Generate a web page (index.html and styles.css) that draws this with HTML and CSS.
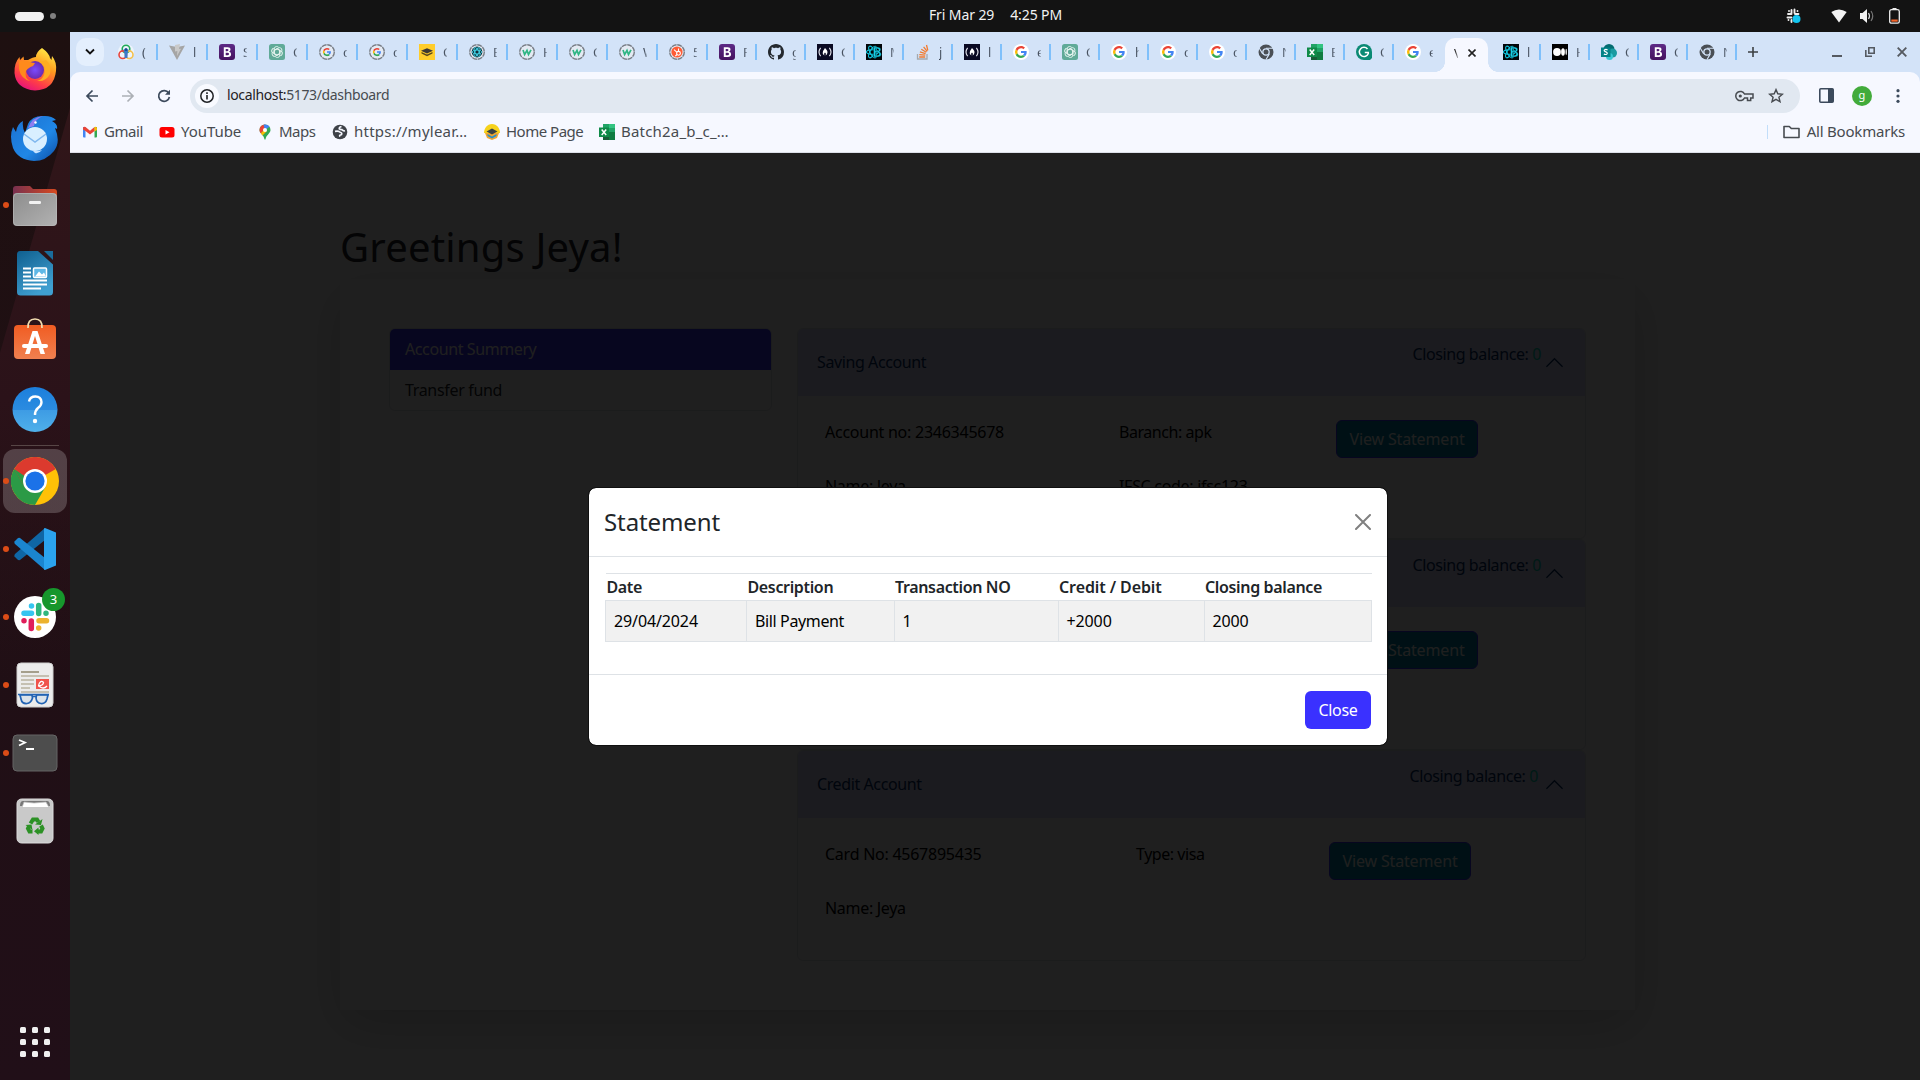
FILE: index.html
```html
<!DOCTYPE html>
<html lang="en">
<head>
<meta charset="utf-8">
<title>Dashboard</title>
<link rel="stylesheet" href="styles.css">
</head>
<body>
<svg class="sprite" xmlns="http://www.w3.org/2000/svg">
  <linearGradient id="gp" x1="0" y1="0" x2="0" y2="1"><stop offset="0" stop-color="#5d2a86"/><stop offset="1" stop-color="#45115e"/></linearGradient>
  <symbol id="rings" viewBox="0 0 16 16"><circle cx="8" cy="8" r="8" fill="#fff" opacity=".6"/><g fill="none" stroke-width="1.6"><circle cx="8" cy="5" r="3.800" stroke="#1faa59"/><circle cx="4.8" cy="10.700" r="3.800" stroke="#e8453c"/><circle cx="11.200" cy="10.700" r="3.800" stroke="#f5c04a"/></g><path d="M5.500 5.500h5l-1 4.500v4h-3v-4z" fill="#3c78c8"/><circle cx="8" cy="5.500" r="1.500" fill="#174b8c"/></symbol>
  <symbol id="vite" viewBox="0 0 16 16"><path d="M0 1.500 8 3l8-1.500L8 16z" fill="#a5a5a5"/><path d="m6 1 5-1-1 5 2-.3L8 12l.4-5L6 7.500z" fill="#c9c9c9"/></symbol>
  <symbol id="boot" viewBox="0 0 16 16"><rect width="16" height="16" rx="3" fill="url(#gp)"/><path d="M4.800 3.300h3.900q2.800 0 2.800 2.300 0 1.600-1.400 2.100 2 .4 2 2.500 0 2.700-3.200 2.700H4.800zM6.700 4.900v2.300h1.500q1.300 0 1.300-1.150T8.200 4.900zM6.700 8.700v2.600h1.800q1.500 0 1.500-1.300T8.500 8.700z" fill="#fff" fill-rule="evenodd"/></symbol>
  <symbol id="gpt" viewBox="0 0 16 16"><rect width="16" height="16" rx="2.500" fill="#60aa98"/><g fill="none" stroke="#e9f5f1" stroke-width=".9" stroke-linejoin="round"><path id="petal" d="M5.200 8.900V5q0-2.500 2.400-2.500 1.200 0 2 .8M5.200 6.300 8 4.700l2.600 1.500"/><use href="#petal" transform="rotate(60 8 8)"/><use href="#petal" transform="rotate(120 8 8)"/><use href="#petal" transform="rotate(180 8 8)"/><use href="#petal" transform="rotate(240 8 8)"/><use href="#petal" transform="rotate(300 8 8)"/></g></symbol>
  <symbol id="dash" viewBox="0 0 16 16"><circle cx="8" cy="8" r="7.300" fill="#e4eaf3" stroke="#777c84" stroke-width="1.400" stroke-dasharray="5 .74"/></symbol>
  <symbol id="g" viewBox="0 0 48 48"><path fill="#4285f4" d="M45 24.500c0-1.600-.1-2.700-.4-3.900H24v7.100h12.100c-.2 1.800-1.600 4.500-4.500 6.300l6.900 5.300C42.600 35.500 45 30.500 45 24.500z"/><path fill="#34a853" d="M24 46c5.900 0 10.900-2 14.500-5.300L31.600 35.300c-1.900 1.300-4.300 2.200-7.600 2.200-5.800 0-10.700-3.800-12.500-9.100l-7.100 5.500C8 41 15.400 46 24 46z"/><path fill="#fbbc05" d="M11.500 28.400a13.500 13.500 0 0 1 0-8.700l-7.200-5.600a22 22 0 0 0 0 19.800z"/><path fill="#ea4335" d="M24 10.500c4.100 0 6.900 1.800 8.500 3.300l6.200-6C34.900 4.200 29.900 2 24 2 15.400 2 8 7 4.300 14.100l7.200 5.600C13.300 14.300 18.200 10.500 24 10.500z"/></symbol>
  <symbol id="goog" viewBox="0 0 16 16"><circle cx="8" cy="8" r="8" fill="#fff"/><use href="#g" x="1.500" y="1.500" width="13" height="13"/></symbol>
  <symbol id="googd" viewBox="0 0 16 16"><use href="#dash"/><use href="#g" x="3.500" y="3.500" width="9" height="9"/></symbol>
  <symbol id="book" viewBox="0 0 16 16"><path fill="#ffcd2b" d="M0 0h16v16H0z"/><path d="m8 4.300 6 2.500-6 2.700-6-2.700z" fill="#3c3733"/><path d="m2.500 8 5.500 2.500L13.500 8v1.500L8 12.200 2.500 9.500z" fill="#5d4a1d"/></symbol>
  <symbol id="reactd" viewBox="0 0 16 16"><use href="#dash"/><circle cx="8" cy="8" r="5.400" fill="#12303a"/><g fill="none" stroke="#3fd0e4" stroke-width=".9"><ellipse cx="8" cy="8" rx="4.800" ry="2"/><ellipse cx="8" cy="8" rx="4.800" ry="2" transform="rotate(60 8 8)"/><ellipse cx="8" cy="8" rx="4.800" ry="2" transform="rotate(120 8 8)"/></g></symbol>
  <symbol id="wd" viewBox="0 0 16 16"><use href="#dash"/><path d="m4 6 1.600 4.500L8 6.500l1.500 4L12 5.800" fill="none" stroke="#2fb583" stroke-width="1.700"/></symbol>
  <symbol id="hubd" viewBox="0 0 16 16"><use href="#dash"/><circle cx="8" cy="8" r="5.600" fill="#ff5c35"/><g fill="none" stroke="#fff" stroke-width="1.100"><circle cx="9.500" cy="9.300" r="1.900"/><path d="M9.500 7.300V4.500M8 8.300 5 5.700M8 10.500l-1.700 1.700"/></g></symbol>
  <symbol id="gh" viewBox="0 0 16 16"><path fill="#24292f" fill-rule="evenodd" d="M8 0C3.580 0 0 3.580 0 8c0 3.540 2.290 6.530 5.470 7.590.4.070.55-.17.55-.38 0-.19-.01-.82-.01-1.490-2.010.37-2.530-.49-2.690-.94-.09-.23-.48-.94-.82-1.130-.28-.15-.68-.52-.01-.53.63-.01 1.080.58 1.230.82.72 1.210 1.870.87 2.330.66.07-.52.28-.87.51-1.070-1.780-.2-3.640-.89-3.640-3.950 0-.87.31-1.590.82-2.150-.08-.2-.36-1.020.08-2.120 0 0 .67-.21 2.200.82.64-.18 1.320-.27 2-.27s1.360.09 2 .27c1.530-1.040 2.200-.82 2.200-.82.44 1.100.16 1.920.08 2.120.51.56.82 1.270.82 2.150 0 3.070-1.870 3.750-3.650 3.950.29.25.54.73.54 1.480 0 1.070-.01 1.930-.01 2.200 0 .21.15.46.55.38A8.010 8.010 0 0 0 16 8c0-4.420-3.580-8-8-8z"/></symbol>
  <symbol id="fcc" viewBox="0 0 16 16"><path fill="#0a0a23" d="M0 0h16v16H0z"/><path d="M3.600 3.800Q.400 8 3.600 12.200M12.400 3.800q3.200 4.200 0 8.400" fill="none" stroke="#e8e8f0" stroke-width="1.100"/><path d="M8 4c2 2 3 3.600 2.300 5.300Q9.800 11 8.600 11.400q1-1.600-.6-2.800-1.600 1.200-.6 2.800Q6 10.800 5.700 9.300 5.500 7 8 4z" fill="#fff"/></symbol>
  <symbol id="reactb" viewBox="0 0 16 16"><path fill="#030609" d="M0 0h16v16H0z"/><g fill="none" stroke="#11c8e0" stroke-width="1.100"><ellipse cx="6.500" cy="8" rx="6" ry="2.300"/><ellipse cx="6.500" cy="8" rx="6.500" ry="2.400" transform="rotate(60 6.500 8)"/><ellipse cx="6.500" cy="8" rx="6.500" ry="2.400" transform="rotate(120 6.500 8)"/></g><path d="M7.500 3h4q3.300 0 3.300 2.500 0 1.700-1.300 2.200 1.800.5 1.800 2.600 0 2.700-3.300 2.700H7.500zM9.500 4.800V7h1.700q1.500 0 1.500-1.100t-1.500-1.100zM9.500 8.700v2.500h2q1.600 0 1.600-1.250t-1.600-1.250z" fill="#19cfe6" stroke="#030609" stroke-width=".4" fill-rule="evenodd"/></symbol>
  <symbol id="so" viewBox="0 0 16 16"><path d="M2.500 10v5h9.500v-5" fill="none" stroke="#a5a9ad" stroke-width="1.300"/><path d="M4.200 13h6M4.300 10.600l6 .6M4.900 7.900l5.700 1.700M6.300 5.200l5 3M8.600 2.800l3.600 4.500M11.500 1l1.300 5.400" fill="none" stroke="#f27a2e" stroke-width="1.300"/></symbol>
  <symbol id="chg" viewBox="0 0 16 16"><circle cx="8" cy="8" r="7.500" fill="#4a4f55"/><circle cx="8" cy="8" r="3.800" fill="#d3e3f8"/><circle cx="8" cy="8" r="2.500" fill="#4a4f55"/><path d="M8 4.200h7M4.700 9.900 1.200 4M11.300 9.900 7.900 15.700" stroke="#d3e3f8" stroke-width="1.100"/></symbol>
  <symbol id="xl" viewBox="0 0 16 16"><path d="M4 0h12v16H4z" fill="#107c41"/><path d="M10 0h6v4h-6z" fill="#33c481"/><path d="M4 0h6v4H4z" fill="#21a366"/><path d="M10 8h6v4h-6z" fill="#107c41"/><path d="M4 8h6v8H4z" fill="#185c37"/><path d="M10 4h6v4h-6z" fill="#21a366"/><path d="M0 3.500h10v9.500H0z" fill="#0f8a48"/><path d="m2.700 5.500 4.500 5.500m0-5.500L2.700 11" stroke="#fff" stroke-width="1.500"/></symbol>
  <symbol id="gram" viewBox="0 0 16 16"><path d="M8 0a8 8 0 0 1 8 8v6l-2 2H8A8 8 0 0 1 8 0z" fill="#0b8a74"/><path d="M11.500 5A4.600 4.600 0 1 0 12.300 9.500V8.600H8.800" fill="none" stroke="#fff" stroke-width="1.500"/></symbol>
  <symbol id="med" viewBox="0 0 16 16"><path d="M0 0h16v16H0z"/><circle cx="5" cy="8" r="3.900" fill="#fff"/><ellipse cx="11" cy="8" rx="1.900" ry="3.700" fill="#fff"/><ellipse cx="14.200" cy="8" rx=".7" ry="3.300" fill="#fff"/></symbol>
  <symbol id="sp" viewBox="0 0 16 16"><circle cx="8" cy="5.500" r="5.500" fill="#036c70"/><circle cx="11.500" cy="9" r="4.500" fill="#1a9ba1"/><circle cx="8.500" cy="12.500" r="3.500" fill="#37c6d0"/><path d="M0 3.500h9.500v9.500H0z" fill="#038387"/><path d="M6.600 6Q5 5 3.800 5.700t0 1.700l1.800.9q1.300 1.100 0 1.900-1.200.7-2.700-.3" fill="none" stroke="#fff" stroke-width="1.200"/></symbol>
</svg>

<header class="topbar">
  <div class="workspaces"><i></i><b></b></div>
  <div class="clock"><span>Fri Mar 29</span><span>4:25 PM</span></div>
  <div class="tray">
    <svg class="tray-slack" width="16" height="18" viewBox="0 0 16 18"><g stroke="#eee" stroke-width="1.900" stroke-linecap="round"><path d="M6.500 3v3.500M9.500 2.500V6M3 7h3.500M10 7h3.500M2.500 10.500h4M6.500 13v2M9.500 11v3M4 4v.1M12.500 4v.1M3.500 13v.1"/></g><circle cx="11.500" cy="12" r="4" fill="#12c5f0"/></svg>
    <svg class="tray-wifi" width="16" height="14" viewBox="0 0 16 14"><path d="M.300 3Q8-2 15.700 3L8 13.500z" fill="#f4f4f4"/></svg>
    <svg class="tray-vol" width="16" height="14" viewBox="0 0 16 14"><path d="M1 4h2.500L8 0v14L3.500 10H1z" fill="#f4f4f4"/><path d="M9.500 4q2 3 0 6" fill="none" stroke="#ddd" stroke-width="1.200"/><path d="M12 2q3.500 5 0 10" fill="none" stroke="#777" stroke-width="1.200"/></svg>
    <svg width="11" height="16" viewBox="0 0 11 16"><path d="M3.500 0h4v1.500h-4z" fill="#eee"/><rect x=".7" y="1.600" width="9.600" height="13.600" rx="1.800" fill="none" stroke="#eee" stroke-width="1.300"/><path d="M2.300 11.500h6.400v2.200H2.300z" fill="#f2642a"/></svg>
  </div>
</header>

<div class="desktop">
<nav class="dock">
  <div class="app"><svg width="48" height="48" viewBox="0 0 48 48"><defs><linearGradient id="ff" x1=".8" y1="0" x2=".3" y2="1"><stop offset="0" stop-color="#fff04a"/><stop offset=".4" stop-color="#ff9a1f"/><stop offset=".75" stop-color="#ff3d47"/><stop offset="1" stop-color="#e5127d"/></linearGradient><radialGradient id="ffp"><stop offset="0" stop-color="#7a4bff"/><stop offset="1" stop-color="#6a2bb0"/></radialGradient></defs><path d="M31 3q7 5 8 10l1.500 2 .5-4Q46 17 45 26 43 45 24 45.500 5 44 3.500 28q-.5-10 5-16l.5 3 3.500-3.500.5 3.500h4q5-3 8-3Q25 7 31 3z" fill="url(#ff)"/><circle cx="24" cy="25" r="9" fill="url(#ffp)"/><path d="M8 16q8-1 11 1 3 1 5 1-1 3-4.500 4Q16 24 15 26q-2 7 4 10-9-2-11-12z" fill="#ff8a1c"/><path d="M29 17q7 4 4 13-2 5-7 6 9 1 13-7 2-9-4-14z" fill="#ffad20"/></svg></div>
  <div class="app bird"><svg width="50" height="48" viewBox="0 0 50 48"><defs><linearGradient id="tb" x1="0" y1="0" x2="1" y2="1"><stop offset="0" stop-color="#1b70cf"/><stop offset=".6" stop-color="#2087e6"/><stop offset="1" stop-color="#0c4da4"/></linearGradient></defs><path d="M18 10Q22 1 35 2q7 0 11 4l-4 1q6 3 5 8l-2-1q6 14-1 23-8 10-20 10Q8 46 3 34-1 22 3 13l3 5q1-8 7-11-1 6 2 12z" fill="url(#tb)"/><path d="M18 14Q22 3 33 2q-8 3-9 10z" fill="#8f7cf0"/><circle cx="25.500" cy="8.500" r="1.200" fill="#fff"/><circle cx="25" cy="25" r="12" fill="#d9efff"/><path d="M14 20l11 8 11-8" fill="none" stroke="#80b8ee" stroke-width="1.500"/><path d="M22 36q5 2 10 0-3 4-7 3z" fill="#c5e2ff"/></svg></div>
  <div class="app running"><svg width="48" height="48" viewBox="0 0 48 48"><defs><linearGradient id="fd"><stop offset="0" stop-color="#78304f"/><stop offset="1" stop-color="#d84a20"/></linearGradient><linearGradient id="fg" x1="0" y1="0" x2="1" y2="1"><stop offset="0" stop-color="#8d8d8d"/><stop offset="1" stop-color="#b2b2b2"/></linearGradient></defs><path d="M2 8q0-3 3-3h14l3 3h21q3 0 3 3v10H2z" fill="url(#fd)"/><rect x="2" y="12" width="44" height="33" rx="4" fill="url(#fg)"/><rect x="2.500" y="12.500" width="43" height="32" rx="4" fill="none" stroke="#bbb" stroke-opacity=".6"/><rect x="18" y="20" width="12" height="3" rx="1.200" fill="#f2f2f2"/></svg></div>
  <div class="app"><svg width="48" height="48" viewBox="0 0 48 48"><defs><linearGradient id="lw" x1="0" y1="0" x2=".5" y2="1"><stop offset="0" stop-color="#0f5f8f"/><stop offset="1" stop-color="#3f9fd0"/></linearGradient></defs><path d="M9 2h18L42 15.500V43q0 3.500-3.500 3.500h-29Q6 46.500 6 43V5.500Q6 2 9 2z" fill="url(#lw)"/><path d="M33 2h9v9z" fill="#1a6c9c"/><path d="M12 19.500h8M12 23.500h8M12 27.500h8M12 31.500h24M12 35.500h24M12 39.500h18" stroke="#fff" stroke-width="2"/><rect x="22.500" y="19" width="13" height="9.500" rx="1" fill="#5fb8e6" stroke="#fff" stroke-width="1.500"/><path d="m24 27.500 4-5 3 3 2-2 2 4z" fill="#fff"/></svg></div>
  <div class="app"><svg width="48" height="48" viewBox="0 0 48 48"><defs><linearGradient id="sw" x1="0" y1="0" x2="0" y2="1"><stop offset="0" stop-color="#f15c22"/><stop offset="1" stop-color="#f08050"/></linearGradient></defs><rect x="3" y="8" width="42" height="34" rx="4" fill="url(#sw)"/><path d="M17 11Q16.500 2 24 2t7 9" fill="none" stroke="#f2ddb0" stroke-width="1.700"/><path d="M21.500 14h5l7.500 23h-4.500L24 19l-5.500 18H14z" fill="#fff"/><rect x="11" y="27" width="26" height="4" rx="2" fill="#fff"/></svg></div>
  <div class="app"><svg width="48" height="48" viewBox="0 0 48 48"><defs><linearGradient id="hp" x1="0" y1="0" x2="0" y2="1"><stop offset="0" stop-color="#1c7fdc"/><stop offset=".5" stop-color="#2b8be0"/><stop offset=".5" stop-color="#3d9be4"/><stop offset="1" stop-color="#4fb0ea"/></linearGradient></defs><circle cx="24" cy="24.500" r="22.500" fill="url(#hp)"/><path d="M18 16.500q1-5 6.500-5t6 5.500q0 3.500-3.500 6-3 2.500-3 7" fill="none" stroke="#fff" stroke-width="2.400"/><circle cx="24" cy="36" r="2.200" fill="#fff"/></svg></div>
  <hr>
  <div class="app running active"><svg width="48" height="48" viewBox="0 0 48 48"><circle cx="24" cy="24" r="24" fill="#ffc107"/><path d="M24 24 3.200 12A24 24 0 0 1 44.800 12z" fill="#dc3a2e"/><path d="M3.200 12A24 24 0 0 0 24 48L34.400 30 24 24z" fill="#2b9a46"/><path d="M3.200 12 13.600 30 24 24 24 12z" fill="#dc3a2e"/><path d="M3.200 12 13.600 30H15V20z" fill="#2b9a46"/><circle cx="24" cy="24" r="12" fill="#fff"/><circle cx="24" cy="24" r="9.600" fill="#1b72e8"/></svg></div>
  <div class="app running"><svg width="48" height="48" viewBox="0 0 48 48"><path d="M4 29 34 3v12L9 35q-1.500.500-2.500-.5L3.500 31.500Q3 30 4 29z" fill="#0f66a5"/><path d="M4 19 34 45V33L9 13q-1.500-.5-2.500.5L3.500 16.500Q3 18 4 19z" fill="#1b86d0"/><path d="M34 3 45 7.500v33L34 45q-1.500 0-1-3V6q-.500-3 1-3z" fill="#2ba3ee"/></svg></div>
  <div class="app running"><svg width="48" height="48" viewBox="0 0 48 48"><circle cx="24" cy="24" r="21" fill="#fff"/><g stroke-width="5.500" stroke-linecap="round" fill="none"><path d="M13 20.300h7.500M20.500 13v.01" stroke="#36c5f0"/><path d="M27.700 12.500v8M35 20.300v.01" stroke="#2eb67d"/><path d="M28 27.700h7.500M27.700 35v.01" stroke="#ecb22e"/><path d="M20.300 28v7.500M13 27.700v.01" stroke="#e01e5a"/></g></svg><span class="badge">3</span></div>
  <div class="app running"><svg width="48" height="48" viewBox="0 0 48 48"><rect x="6" y="2" width="36" height="44" rx="4" fill="#ececec" stroke="#cfcfcf"/><path d="M10 11h18" stroke="#a59f8c" stroke-width="2"/><path d="M10 15h28M10 19h13M10 23h13M10 27h9M10 31h28" stroke="#c5c0b2" stroke-width="2"/><rect x="25" y="18" width="13" height="10" fill="#f0544c"/><path d="M27 25q5.500-.5 5.500-3.500-2-2.500-4 .5t1.500 4.500 6-1.500" fill="none" stroke="#fff" stroke-width="1.300"/><g fill="#c9d9e8" fill-opacity=".5" stroke="#2364b4" stroke-width="1.700"><path d="M9 34h12l.500 3q-1.500 5-5.500 5.500-5 .5-6-4.500z"/><path d="M25.500 34H37l-1 4q-1.500 5-6 4.500T25 37z"/></g><path d="M7 33.500h31M21.500 35.500h4" stroke="#2364b4" stroke-width="1.500"/></svg></div>
  <div class="app running"><svg width="48" height="48" viewBox="0 0 48 48"><rect x="2" y="6" width="44" height="36" rx="4" fill="#4d4d4d" stroke="#656565"/><path d="m8 11 6 2.500L8 16.500M15 20h8" fill="none" stroke="#fff" stroke-width="1.800"/></svg></div>
  <div class="app"><svg width="48" height="48" viewBox="0 0 48 48"><rect x="6" y="2" width="36" height="44" rx="4.500" fill="#c9c9c9" stroke="#dcdcdc"/><path d="M9 9q0-5 3-5h24q3 0 3 5z" fill="#777"/><path d="M11 10.500 13 5l10 1 12-1 3 5.500z" fill="#fff" stroke="#bbb" stroke-width=".7"/><g fill="none" stroke="#2c9125" stroke-width="4"><path d="m19.500 26.500 2.500-4h4l1.500 2.500M30 28.500l1.500 3-1.500 3h-3.500M21.500 34.500h-3l-1.500-3 1-2" /></g><path d="m24 27.500 6 .5 1.500-6zM27.500 30.500v7.500l-4.500-3.700zM14.500 28l6-.5 1 5.500z" fill="#2c9125"/></svg></div>
  <div class="apps-grid"><i></i><i></i><i></i><i></i><i></i><i></i><i></i><i></i><i></i></div>
</nav>

<main class="browser">
  <div class="tabstrip">
    <div class="tab-search"><svg width="10" height="8" viewBox="0 0 10 8"><path d="m1 1.500 4 4 4-4" fill="none" stroke="#111" stroke-width="1.800"/></svg></div>
    <div class="tab wide first"><svg><use href="#rings"/></svg><span>(</span></div>
    <div class="tab wide"><svg><use href="#vite"/></svg><span>l</span></div>
    <div class="tab wide"><svg><use href="#boot"/></svg><span>S</span></div>
    <div class="tab wide"><svg><use href="#gpt"/></svg><span>C</span></div>
    <div class="tab wide"><svg><use href="#googd"/></svg><span>c</span></div>
    <div class="tab wide"><svg><use href="#googd"/></svg><span>c</span></div>
    <div class="tab wide"><svg><use href="#book"/></svg><span>C</span></div>
    <div class="tab wide"><svg><use href="#reactd"/></svg><span>E</span></div>
    <div class="tab wide"><svg><use href="#wd"/></svg><span>H</span></div>
    <div class="tab wide"><svg><use href="#wd"/></svg><span>C</span></div>
    <div class="tab wide"><svg><use href="#wd"/></svg><span>W</span></div>
    <div class="tab wide"><svg><use href="#hubd"/></svg><span>5</span></div>
    <div class="tab"><svg><use href="#boot"/></svg><span>F</span></div>
    <div class="tab"><svg><use href="#gh"/></svg><span>g</span></div>
    <div class="tab"><svg><use href="#fcc"/></svg><span>C</span></div>
    <div class="tab"><svg><use href="#reactb"/></svg><span>M</span></div>
    <div class="tab"><svg><use href="#so"/></svg><span>j</span></div>
    <div class="tab"><svg><use href="#fcc"/></svg><span>l</span></div>
    <div class="tab"><svg><use href="#goog"/></svg><span>e</span></div>
    <div class="tab"><svg><use href="#gpt"/></svg><span>C</span></div>
    <div class="tab"><svg><use href="#goog"/></svg><span>h</span></div>
    <div class="tab"><svg><use href="#goog"/></svg><span>c</span></div>
    <div class="tab"><svg><use href="#goog"/></svg><span>c</span></div>
    <div class="tab"><svg><use href="#chg"/></svg><span>N</span></div>
    <div class="tab"><svg><use href="#xl"/></svg><span>E</span></div>
    <div class="tab"><svg><use href="#gram"/></svg><span>C</span></div>
    <div class="tab last"><svg><use href="#goog"/></svg><span>e</span></div>
    <div class="tab current"><span>V</span><svg class="x" viewBox="0 0 8 8"><path d="m.5.5 7 7m0-7-7 7" stroke="#222" stroke-width="1.600"/></svg></div>
    <div class="tab"><svg><use href="#reactb"/></svg><span>l</span></div>
    <div class="tab"><svg><use href="#med"/></svg><span>H</span></div>
    <div class="tab"><svg><use href="#sp"/></svg><span>C</span></div>
    <div class="tab"><svg><use href="#boot"/></svg><span>C</span></div>
    <div class="tab"><svg><use href="#chg"/></svg><span>N</span></div>
    <svg class="plus" width="10" height="10" viewBox="0 0 10 10"><path d="M5 0v10M0 5h10" stroke="#3c4043" stroke-width="1.600"/></svg>
    <div class="winctl">
      <svg width="10" height="10" viewBox="0 0 10 10"><path d="M0 9h10" stroke="#555a61" stroke-width="2"/></svg>
      <svg width="10" height="10" viewBox="0 0 10 10"><path d="M3.800.8h5.400v5.400H3.800zM.800 3v6.200H7" fill="none" stroke="#555a61" stroke-width="1.600"/></svg>
      <svg width="10" height="10" viewBox="0 0 10 10"><path d="m.700.700 8.600 8.600m0-8.600L.700 9.300" stroke="#555a61" stroke-width="1.900"/></svg>
    </div>
  </div>

  <div class="toolbar">
    <svg class="nav-back" width="14" height="14" viewBox="0 0 14 14"><path d="M13 7H2m5.500-5.500L2 7l5.500 5.500" fill="none" stroke="#3c4a5c" stroke-width="1.700"/></svg>
    <svg class="nav-fwd" width="14" height="14" viewBox="0 0 14 14"><path d="M1 7h11M6.500 1.500 12 7l-5.500 5.500" fill="none" stroke="#acb0b6" stroke-width="1.700"/></svg>
    <svg class="nav-reload" width="14" height="14" viewBox="0 0 14 14"><path d="M11.600 4A5.400 5.400 0 1 0 12.400 8" fill="none" stroke="#3c4a5c" stroke-width="1.700"/><path d="M13 .8v5H8z" fill="#3c4a5c"/></svg>
    <div class="omnibox">
      <span class="site"><svg width="14" height="14" viewBox="0 0 14 14"><circle cx="7" cy="7" r="6.200" fill="none" stroke="#1f2125" stroke-width="1.500"/><path d="M7 6v4.500M7 3.300v1.600" stroke="#1f2125" stroke-width="1.600"/></svg></span>
      <span class="url"><b>localhost:</b>5173/dashboard</span>
      <svg class="key" width="19" height="12" viewBox="0 0 19 12"><path d="M9.500 4A4.600 4.600 0 1 0 9.500 8H12.500v2.600h3.200V8H18V4z" fill="none" stroke="#474b50" stroke-width="1.500"/><circle cx="5.300" cy="6" r="1.600" fill="#474b50"/></svg>
      <svg class="star" width="16" height="15" viewBox="0 0 16 15"><path d="m8 1.600 1.800 4.200 4.600.4-3.500 3 1.100 4.500L8 11.300l-4 2.400 1.100-4.500-3.500-3 4.600-.4z" fill="none" stroke="#474b50" stroke-width="1.400"/></svg>
    </div>
    <svg class="panel" width="15" height="15" viewBox="0 0 15 15"><rect x=".8" y=".8" width="13.400" height="13.400" rx="1" fill="none" stroke="#3c4a5c" stroke-width="1.600"/><path d="M9 1h5v13H9z" fill="#3c4a5c"/></svg>
    <span class="avatar">g</span>
    <svg class="dots" width="4" height="14" viewBox="0 0 4 14"><g fill="#3c4a5c"><circle cx="2" cy="1.700" r="1.600"/><circle cx="2" cy="7" r="1.600"/><circle cx="2" cy="12.300" r="1.600"/></g></svg>
  </div>

  <div class="bookmarks">
    <a class="bm-gmail"><svg viewBox="0 0 16 16"><path d="M1 3h2.500v10.500H2A1 1 0 0 1 1 12.500z" fill="#4285f4"/><path d="M12.500 3H15v9.500a1 1 0 0 1-1 1h-1.500z" fill="#34a853"/><path d="M1 4.500Q1 2 3.500 3L8 6.700 12.500 3v4L8 10.500 3.500 7 1 5.500z" fill="#ea4335"/><path d="m12.500 3q2.500-1 2.500 1.500V6l-2.500 1.500z" fill="#fbbc04"/></svg><span>Gmail</span></a>
    <a class="bm-yt"><svg viewBox="0 0 16 16"><rect x=".5" y="3" width="15" height="10.500" rx="2.500" fill="#f00"/><path d="m6.500 6 4 2.200-4 2.300z" fill="#fff"/></svg><span>YouTube</span></a>
    <a class="bm-maps"><svg viewBox="0 0 16 16"><path d="M8 .5a5.500 5.500 0 0 1 5.500 5.500c0 3.500-4.500 5-5 9.500h-1C7 11 2.500 9.500 2.500 6A5.500 5.500 0 0 1 8 .5z" fill="#34a853"/><path d="M2.500 6A5.500 5.500 0 0 1 8 .5L9 3 4 9.500Q2.500 8 2.500 6z" fill="#ea4335"/><path d="M6.500.700q4-1 6 2L8 6z" fill="#4285f4"/><path d="M3.800 9.200 8 5l2 2-4.500 4.500z" fill="#fbbc04"/><circle cx="8" cy="6" r="2" fill="#fff"/></svg><span>Maps</span></a>
    <a class="bm-learn"><svg viewBox="0 0 16 16"><circle cx="8" cy="8" r="7.300" fill="#3e4248"/><path d="M3 7.300q3-.5 4 .2.800.8 1.800 1t1 1.300-1.300 1.200-.6 1.700M9.500 2.500Q7 3.200 7.300 4.800q1.200 1 2.700.9 1.200 1.500 3 1" fill="none" stroke="#f6f8ff" stroke-width="1.700"/></svg><span>https://mylear…</span></a>
    <a class="bm-home"><svg viewBox="0 0 16 16"><path d="M8 0c5 0 8 4.500 8 9H0c0-4.500 3-9 8-9z" fill="#f6d21c"/><path d="M1 9h14l-2 5-5 2-5-2z" fill="#f0a630"/><path d="m2.500 7.500 5.500-3 5.500 3L8 10.500z" fill="#3a4242"/><path d="m3.500 10 4.500 2.500 4.500-2.500v2L8 14.500 3.500 12z" fill="#2c8fc7"/></svg><span>Home Page</span></a>
    <a class="bm-batch"><svg viewBox="0 0 16 16"><use href="#xl"/></svg><span>Batch2a_b_c_…</span></a>
    <a class="all"><svg class="folder" viewBox="0 0 17 14"><path d="M1 12.500v-11h5.300l2 2H16v9z" fill="none" stroke="#474b50" stroke-width="1.600" stroke-linejoin="round"/></svg><span>All Bookmarks</span></a>
  </div>

  <section class="viewport">
    <div class="page">
      <h1>Greetings Jeya!</h1>
      <div class="card">
        <ul class="menu">
          <li class="on">Account Summery</li>
          <li><span class="tf">Transfer fund</span></li>
        </ul>
        <div class="accordion">
          <article>
            <header><span class="name">Saving Account</span><span class="bal">Closing balance: <em>0</em></span><svg class="chev" viewBox="0 0 16 16"><path d="m.400 12 7.600-7.600L15.600 12" fill="none" stroke="#052c65" stroke-width="1.200"/></svg></header>
            <div class="body">
              <div class="col a"><p>Account no: 2346345678</p><p class="nm">Name: Jeya</p></div>
              <div class="col b"><p class="br">Baranch: apk</p><p class="ifsc">IFSC code: ifsc123</p></div>
              <button class="view">View Statement</button>
            </div>
          </article>
          <article>
            <header><span class="name"></span><span class="bal">Closing balance: <em>0</em></span><svg class="chev" viewBox="0 0 16 16"><path d="m.400 12 7.600-7.600L15.600 12" fill="none" stroke="#052c65" stroke-width="1.200"/></svg></header>
            <div class="body">
              <div class="col a"></div>
              <div class="col b"></div>
              <button class="view">View Statement</button>
            </div>
          </article>
          <article class="credit">
            <header><span class="name">Credit Account</span><span class="bal">Closing balance: <em>0</em></span><svg class="chev" viewBox="0 0 16 16"><path d="m.400 12 7.600-7.600L15.600 12" fill="none" stroke="#052c65" stroke-width="1.200"/></svg></header>
            <div class="body">
              <div class="col a"><p>Card No: 4567895435</p><p class="nm">Name: Jeya</p></div>
              <div class="col b"><p class="br">Type: visa</p></div>
              <button class="view">View Statement</button>
            </div>
          </article>
        </div>
      </div>
    </div>
    <div class="backdrop">
      <div class="modal">
        <div class="modal-head"><h2>Statement</h2><svg width="16" height="16" viewBox="0 0 16 16"><path d="m1 1 14 14M15 1 1 15" stroke="#808080" stroke-width="2" stroke-linecap="round"/></svg></div>
        <div class="modal-body">
          <table>
            <colgroup><col class="c1"><col class="c2"><col class="c3"><col class="c4"><col class="c5"></colgroup>
            <thead><tr><th>Date</th><th>Description</th><th>Transaction NO</th><th class="cd">Credit / Debit</th><th>Closing balance</th></tr></thead>
            <tbody><tr><td>29/04/2024</td><td class="bp">Bill Payment</td><td>1</td><td>+2000</td><td>2000</td></tr></tbody>
          </table>
        </div>
        <div class="modal-foot"><button class="close">Close</button></div>
      </div>
    </div>
  </section>
</main>
</div>
</body>
</html>
```
FILE: styles.css
```css
* { box-sizing: border-box; }
body {
  margin: 0;
  width: 1920px;
  height: 1080px;
  overflow: hidden;
  display: flex;
  flex-direction: column;
  background: #131313;
  font: 16px/24px "Noto Sans", "Open Sans", sans-serif;
}
svg { display: block; flex: none; }
p, h1, h2, ul { margin: 0; padding: 0; font-weight: 400; }
.sprite { position: absolute; width: 0; height: 0; }

/* system bar */
.topbar {
  height: 32px;
  flex: none;
  display: grid;
  grid-template-columns: 1fr auto 1fr;
  align-items: center;
  color: #f2f2f2;
  font-size: 14px;
}
.workspaces { display: flex; align-items: center; gap: 6px; padding-left: 15px; }
.workspaces i { width: 29px; height: 9px; border-radius: 5px; background: #f2f2f2; }
.workspaces b { width: 6px; height: 6px; border-radius: 50%; background: #808080; }
.clock { display: flex; gap: 16px; padding-left: 71px; letter-spacing: -.1px; margin-top: -2px; }
.tray { display: flex; align-items: center; justify-content: flex-end; padding-right: 20px; }
.tray-slack { margin-right: 30px; }
.tray-wifi { margin-right: 12px; }
.tray-vol { margin-right: 14px; }

.desktop { flex: 1; display: flex; min-height: 0; }

/* dock */
.dock {
  width: 70px;
  flex: none;
  display: flex;
  flex-direction: column;
  padding-top: 3px;
  position: relative;
  background: linear-gradient(#1e1010, #200f15 60%, #210f18);
}
.dock::before {
  content: "";
  position: absolute;
  inset: 0;
  background: linear-gradient(#321719, #2b1219 35%, rgba(33, 15, 24, 0) 62%);
  clip-path: polygon(100% 76px, 100% 100%, 0 100%, 0 321px);
}
.app { height: 68px; flex: none; display: flex; align-items: center; justify-content: center; position: relative; }
.app.bird { padding-top: 2px; }
.app.running::before {
  content: "";
  position: absolute;
  left: 3px;
  top: 31px;
  width: 6px;
  height: 6px;
  border-radius: 50%;
  background: #db4c17;
}
.app.active::after {
  content: "";
  position: absolute;
  inset: 2px 3px;
  border-radius: 12px;
  background: rgba(255, 255, 255, .2);
}
.app svg { position: relative; z-index: 1; }
.app.running::before { z-index: 2; }
.dock hr { width: 48px; height: 1px; border: 0; margin: 2px auto 1px; background: #574646; position: relative; }
.badge {
  position: absolute;
  z-index: 2;
  left: 42px;
  top: 5px;
  width: 23px;
  height: 23px;
  border-radius: 50%;
  background: #17962c;
  color: #fff;
  font-size: 13px;
  line-height: 23px;
  text-align: center;
}
.apps-grid {
  margin: auto auto 23px;
  display: grid;
  grid-template-columns: repeat(3, 6px);
  gap: 6px;
  position: relative;
}
.apps-grid i { width: 6px; height: 6px; border-radius: 1.5px; background: #f0f0f0; }

/* browser chrome */
.browser { flex: 1; min-width: 0; display: flex; flex-direction: column; background: #d3e3f8; }
.tabstrip { height: 40px; flex: none; display: flex; align-items: center; }
.tab-search {
  width: 28px;
  height: 28px;
  margin: 0 3px 0 6px;
  border-radius: 10px;
  background: #e4effd;
  display: flex;
  align-items: center;
  justify-content: center;
}
.tab {
  width: 49px;
  height: 16px;
  flex: none;
  display: flex;
  align-items: center;
  gap: 8px;
  padding-left: 11px;
  border-right: 2px solid #7fc0fb;
}
.tab.wide { width: 50px; }
.tab.wide.first { width: 51px; }
.tab svg { width: 16px; height: 16px; }
.tab span {
  width: 4px;
  overflow: hidden;
  font-size: 13px;
  line-height: 18px;
  color: #3c4654;
  -webkit-mask-image: linear-gradient(90deg, #000 30%, rgba(0, 0, 0, .3));
}
.tab.last { border-color: transparent; }
.tab.current {
  position: relative;
  width: 43px;
  height: 34px;
  margin: 6px 4px 0 2px;
  padding: 0 0 4px 9px;
  gap: 10px;
  border: 0;
  border-radius: 10px 10px 0 0;
  background: #f6f8ff;
}
.tab.current span { width: 4px; color: #222; }
.tab.current::before, .tab.current::after {
  content: "";
  position: absolute;
  bottom: 0;
  width: 10px;
  height: 10px;
}
.tab.current::before { left: -10px; background: radial-gradient(circle at 0 0, transparent 9.6px, #f6f8ff 10px); }
.tab.current::after { right: -10px; background: radial-gradient(circle at 100% 0, transparent 9.6px, #f6f8ff 10px); }
.tab .x { width: 8px; height: 8px; }
.plus { margin-left: 11px; }
.winctl { margin-left: auto; display: flex; gap: 22.5px; padding-right: 13px; }

.toolbar {
  height: 41px;
  flex: none;
  display: flex;
  align-items: center;
  padding: 0 20px 0 15px;
  background: #f6f8ff;
  border-radius: 10px 10px 0 0;
}
.toolbar > svg, .avatar { margin-top: 6px; }
.nav-fwd { margin-left: 22px; }
.nav-reload { margin-left: 22px; }
.omnibox {
  flex: 1;
  height: 34px;
  margin: 6px 19px 0 19px;
  padding: 0 16px 0 5px;
  border-radius: 17px;
  background: #e1e8f1;
  display: flex;
  align-items: center;
}
.site { width: 24px; height: 24px; border-radius: 50%; background: #f8faff; display: flex; align-items: center; justify-content: center; }
.url { margin: -1px auto 0 8px; color: #474b50; font-size: 14px; letter-spacing: -.37px; }
.url b { font-weight: 400; color: #1f2125; }
.key { margin-right: 14px; }
.avatar {
  width: 20px;
  height: 20px;
  margin-left: 18px;
  margin-right: 24px;
  border-radius: 50%;
  background: #42ab3b;
  color: #fff;
  font-size: 11px;
  line-height: 18px;
  text-align: center;
}
.bookmarks {
  height: 40px;
  flex: none;
  display: flex;
  align-items: center;
  padding: 0 15px 0 12px;
  background: #f6f8ff;
  border-bottom: 1px solid #dcdfe8;
  font-size: 15px;
  letter-spacing: -.42px;
  color: #474b50;
}
.bookmarks a { display: flex; align-items: center; gap: 6px; margin-top: -2px; white-space: nowrap; }
.bookmarks span { margin-top: -2px; }
.bookmarks svg { width: 16px; height: 16px; }
.bm-gmail { width: 77px; }
.bm-yt { width: 98px; letter-spacing: -.05px; }
.bm-maps { width: 75px; letter-spacing: -.5px; }
.bm-learn { width: 152px; letter-spacing: .24px; }
.bm-home { width: 115px; letter-spacing: -.5px; }
.bm-batch { letter-spacing: .2px; }
.bookmarks .all { margin-left: auto; letter-spacing: -.2px; border-left: 1.5px solid #c2defa; padding-left: 15px; line-height: 16px; gap: 7px; }
.bookmarks .folder { width: 17px; height: 14px; }

/* page */
.viewport { position: relative; flex: 1; overflow: hidden; background: #fff; }
.page { padding: 69px 0 0 270px; color: #212529; }
h1 { font-size: 40px; line-height: 48px; letter-spacing: .18px; height: 57px; color: #212529; padding-top: 1px; }
.card {
  width: 1295px;
  height: 731px;
  padding: 49px 49px;
  display: flex;
  align-items: flex-start;
  gap: 25px;
  background: #fff;
  box-shadow: 0 16px 48px rgba(0, 0, 0, .175);
}
.menu { width: 383px; list-style: none; border: 1px solid #dee2e6; border-radius: 6px; overflow: hidden; letter-spacing: -.4px; }
.menu li { height: 41px; padding: 9px 15px 8px; line-height: 24px; }
.menu .on { height: 42px; margin: -1px; padding: 9px 16px; background: #3a31ff; color: #fff; }
.menu .tf { letter-spacing: -.33px; }
.accordion { flex: 1; }
article { height: 211px; border: 1px solid #dee2e6; border-radius: 6px; overflow: hidden; }
article header {
  height: 68px;
  margin: -1px -1px 0;
  padding: 0 23px 0 20px;
  display: flex;
  align-items: center;
  background: #d8dcff;
  color: #052c65;
  letter-spacing: -.4px;
}
.name { flex: 1; }
.bal { margin-top: -16px; margin-right: 5px; }
.credit .bal { margin-right: 8px; }
.bal em { font-style: normal; color: #00d0b0; }
.chev { width: 17px; height: 17px; }
.body { display: flex; align-items: flex-start; padding: 24px 0 0 27px; color: #000; letter-spacing: -.25px; }
.col { display: flex; flex-direction: column; gap: 30px; }
.col.a { width: 294px; }
.col.b { width: 217px; }
.br { letter-spacing: -.45px; }
.ifsc { letter-spacing: -.3px; }
.nm { letter-spacing: -.3px; }
.credit .col.a { width: 311px; }
.credit .col.b { width: 193px; }
button { font: inherit; color: #fff; border-radius: 6px; height: 38px; padding: 0; }
.view { width: 142px; background: #0087a8; border: 1px solid #3a31ff; letter-spacing: -.15px; }

/* modal */
.backdrop {
  position: absolute;
  inset: 0;
  background: rgba(0, 0, 0, .88);
  display: flex;
  align-items: flex-start;
  justify-content: center;
  padding: 334px 14px 0 0;
}
.modal {
  width: 800px;
  height: 259px;
  border: 1px solid #101010;
  border-radius: 8px;
  background: #fff;
  background-clip: padding-box;
  color: #212529;
}
.modal-head { height: 69px; padding: 0 16px 1px 15px; display: flex; align-items: center; justify-content: space-between; border-bottom: 1px solid #dee2e6; }
h2 { font-size: 24px; line-height: 36px; letter-spacing: -.1px; }
.modal-body { height: 117px; padding: 16px 15px 16px 16px; }
table { width: 767px; table-layout: fixed; border-collapse: collapse; }
.c1 { width: 141px; }
.c2 { width: 147.5px; }
.c3 { width: 164px; }
.c4 { width: 146px; }
th { height: 27px; padding: 0 1px; text-align: left; font-weight: 600; letter-spacing: -.35px; border-top: 1px solid #dee2e6; }
.cd { letter-spacing: -.1px; }
td { height: 41px; padding: 0 8px; border: 1px solid #dee2e6; background: #f1f1f1; color: #000; letter-spacing: -.12px; }
.bp { letter-spacing: -.37px; }
.modal-foot { height: 71px; padding: 16px 16px; display: flex; justify-content: flex-end; border-top: 1px solid #dee2e6; }
.close { width: 66px; background: #3a31ff; border: 0; letter-spacing: -.3px; }
```
